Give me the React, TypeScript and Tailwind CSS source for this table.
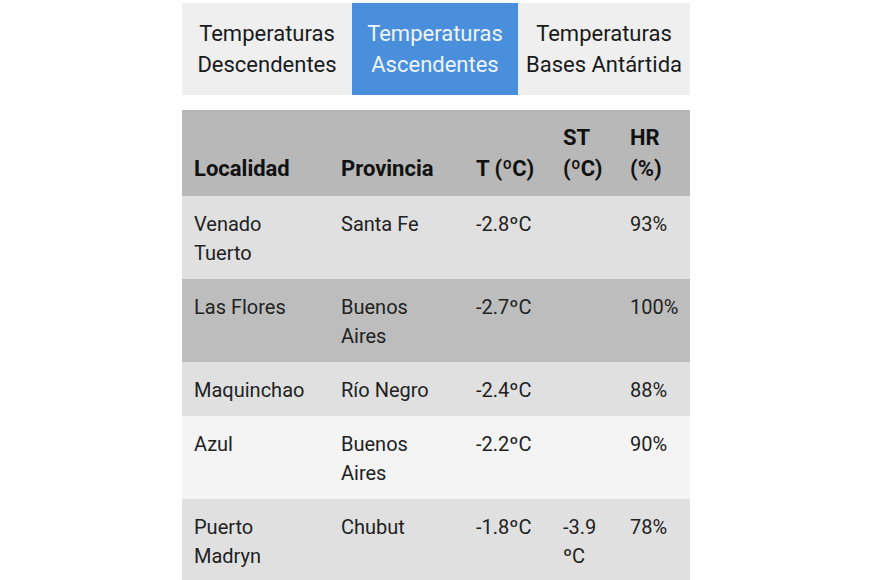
import React from 'react';

const tabs = [
  { key: 'desc', top: 'Temperaturas', bottom: 'Descendentes' },
  { key: 'asc', top: 'Temperaturas', bottom: 'Ascendentes' },
  { key: 'ant', top: 'Temperaturas', bottom: 'Bases Antártida' },
];

const rows = [
  { loc: 'Venado Tuerto', prov: 'Santa Fe', t: '-2.8ºC', st: '', hr: '93%', bg: 'bg-[#e0e0e0]' },
  { loc: 'Las Flores', prov: 'Buenos Aires', t: '-2.7ºC', st: '', hr: '100%', bg: 'bg-[#bdbdbd]' },
  { loc: 'Maquinchao', prov: 'Río Negro', t: '-2.4ºC', st: '', hr: '88%', bg: 'bg-[#e0e0e0]' },
  { loc: 'Azul', prov: 'Buenos Aires', t: '-2.2ºC', st: '', hr: '90%', bg: 'bg-[#f4f4f4]' },
  { loc: 'Puerto Madryn', prov: 'Chubut', t: '-1.8ºC', st: '-3.9 ºC', hr: '78%', bg: 'bg-[#e0e0e0]' },
];

export default function App() {
  const active = 'asc';

  return (
    <div className="w-[870px] h-[580px] overflow-hidden bg-white font-['Roboto',sans-serif] text-[#222]">
      <div className="ml-[182px] w-[508px] pt-[3px]">
        {/* tabs */}
        <div className="flex h-[92px] bg-[#efefef]">
          {tabs.map((t, i) => (
            <div
              key={t.key}
              className={`flex flex-col items-center justify-center text-[22px] leading-[31px] ${
                i === 0 ? 'w-[170px]' : i === 1 ? 'w-[166px]' : 'w-[172px]'
              } ${active === t.key ? 'bg-[#4a8fdb] text-[#eef4fc]' : 'text-[#1a1a1a]'}`}
            >
              <span>{t.top}</span>
              <span>{t.bottom}</span>
            </div>
          ))}
        </div>

        {/* tabla */}
        <table className="mt-[15px] w-full table-fixed border-collapse text-[20px] leading-[29px]">
          <colgroup>
            <col className="w-[147px]" />
            <col className="w-[135px]" />
            <col className="w-[87px]" />
            <col className="w-[67px]" />
            <col className="w-[72px]" />
          </colgroup>
          <thead>
            <tr className="bg-[#b8b8b8] text-[#111] text-[22px] leading-[31px]">
              <th className="px-3 pt-[12px] pb-[12px] text-left align-bottom font-bold">Localidad</th>
              <th className="px-3 pt-[12px] pb-[12px] text-left align-bottom font-bold">Provincia</th>
              <th className="px-3 pt-[12px] pb-[12px] text-left align-bottom font-bold">T (ºC)</th>
              <th className="px-3 pt-[12px] pb-[12px] text-left align-bottom font-bold">ST (ºC)</th>
              <th className="px-3 pt-[12px] pb-[12px] text-left align-bottom font-bold">HR (%)</th>
            </tr>
          </thead>
          <tbody>
            {rows.map((r) => (
              <tr key={r.loc} className={r.bg}>
                <td className="px-3 pt-[14px] pb-[11px] align-top">{r.loc}</td>
                <td className="px-3 pt-[14px] pb-[11px] align-top">{r.prov}</td>
                <td className="px-3 pt-[14px] pb-[11px] align-top">{r.t}</td>
                <td className="px-3 pt-[14px] pb-[11px] align-top">{r.st}</td>
                <td className="px-3 pt-[14px] pb-[11px] align-top">{r.hr}</td>
              </tr>
            ))}
          </tbody>
        </table>
      </div>
    </div>
  );
}
